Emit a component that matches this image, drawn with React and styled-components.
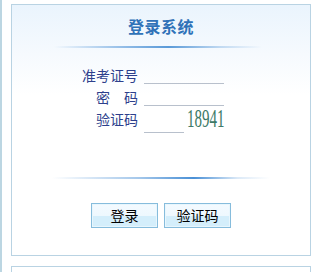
import React from 'react';
import styled, { createGlobalStyle } from 'styled-components';

const Global = createGlobalStyle`
  html, body {
    margin: 0;
    padding: 0;
    background: #fff;
    overflow: hidden;
  }
  body {
    font-family: "Noto Sans CJK SC", "Liberation Sans", sans-serif;
  }
`;

const Page = styled.div`
  border-left: 2px solid #bcd6e2;
  padding: 4px 0 0 9px;
  height: 272px;
  box-sizing: border-box;
  overflow: hidden;
`;

const Panel = styled.div`
  width: 298px;
  height: ${p => p.$h}px;
  border: 1px solid #b9d3e3;
  border-bottom: ${p => p.$open ? 'none' : '1px solid #b9d3e3'};
  background: ${p => p.$plain ? '#fff' : 'linear-gradient(to bottom, #eaf4fd 0px, #f6fafe 50px, #ffffff 90px)'};
  margin-bottom: 10px;
  display: flex;
  flex-direction: column;
  align-items: center;
`;

const Title = styled.h2`
  margin: 9px 0 0;
  font-size: 16px;
  line-height: 24px;
  font-weight: bold;
  color: #2f72b8;
  letter-spacing: 0.5px;
`;

const Divider = styled.div`
  width: ${p => p.$w}px;
  height: 2px;
  margin-top: ${p => p.$top}px;
  margin-left: ${p => p.$shift || 0}px;
  background: ${p => p.$right
    ? 'linear-gradient(to right, rgba(74,144,214,0) 0%, rgba(74,144,214,0.5) 40%, #4a90d6 65%, rgba(74,144,214,0.2) 85%, rgba(74,144,214,0) 100%)'
    : 'linear-gradient(to right, rgba(74,144,214,0) 0%, rgba(74,144,214,0.6) 35%, #5a9ad8 55%, rgba(74,144,214,0.3) 80%, rgba(74,144,214,0) 100%)'};
`;

const Form = styled.div`
  align-self: flex-start;
  margin: 16px 0 0 70px;
  display: flex;
  flex-direction: column;
`;

const Row = styled.div`
  display: flex;
  align-items: flex-start;
  height: ${p => p.$h || 22}px;
`;

const Label = styled.span`
  width: 56px;
  text-align: right;
  font-size: 14px;
  line-height: 22px;
  color: #2d3f8c;
  white-space: pre;
`;

const Field = styled.input`
  box-sizing: border-box;
  width: ${p => p.$w}px;
  height: ${p => p.$h || 20}px;
  margin-left: 6px;
  padding: 0 2px;
  border: none;
  border-bottom: 1px solid #b8c0cc;
  background: transparent;
  outline: none;
  font-size: 13px;
`;

const Code = styled.span`
  display: inline-block;
  margin-left: 3px;
  margin-top: -2px;
  font-family: "Liberation Serif", "Times New Roman", serif;
  font-size: 25px;
  line-height: 26px;
  color: #3d7a66;
  transform: scaleX(0.6);
  transform-origin: left center;
`;

const Buttons = styled.div`
  display: flex;
  gap: 6px;
  margin-top: 24px;
`;

const Button = styled.button`
  width: 67px;
  height: 25px;
  padding: 0;
  border: 1px solid #86bcdc;
  box-shadow: inset 0 0 0 1px #e8f6fd;
  background: linear-gradient(to bottom, #f3faff 0%, #eef8fe 50%, #d4eefb 51%, #d4eefb 100%);
  font-family: "Noto Sans CJK SC", sans-serif;
  font-size: 14px;
  line-height: 21px;
  color: #000;
  cursor: pointer;
`;

export default function App() {
  return (
    <Page>
      <Global />
      <Panel $h={250}>
        <Title>登录系统</Title>
        <Divider $w={208} $top={8} $shift={-6} />
        <Form>
          <Row>
            <Label>准考证号</Label>
            <Field $w={80} />
          </Row>
          <Row>
            <Label>{'密　码'}</Label>
            <Field $w={80} type="password" />
          </Row>
          <Row $h={25}>
            <Label>验证码</Label>
            <Field $w={40} $h={25} />
            <Code>18941</Code>
          </Row>
        </Form>
        <Divider $w={218} $top={44} $right />
        <Buttons>
          <Button>登录</Button>
          <Button>验证码</Button>
        </Buttons>
      </Panel>
      <Panel $h={7} $plain $open />
    </Page>
  );
}
